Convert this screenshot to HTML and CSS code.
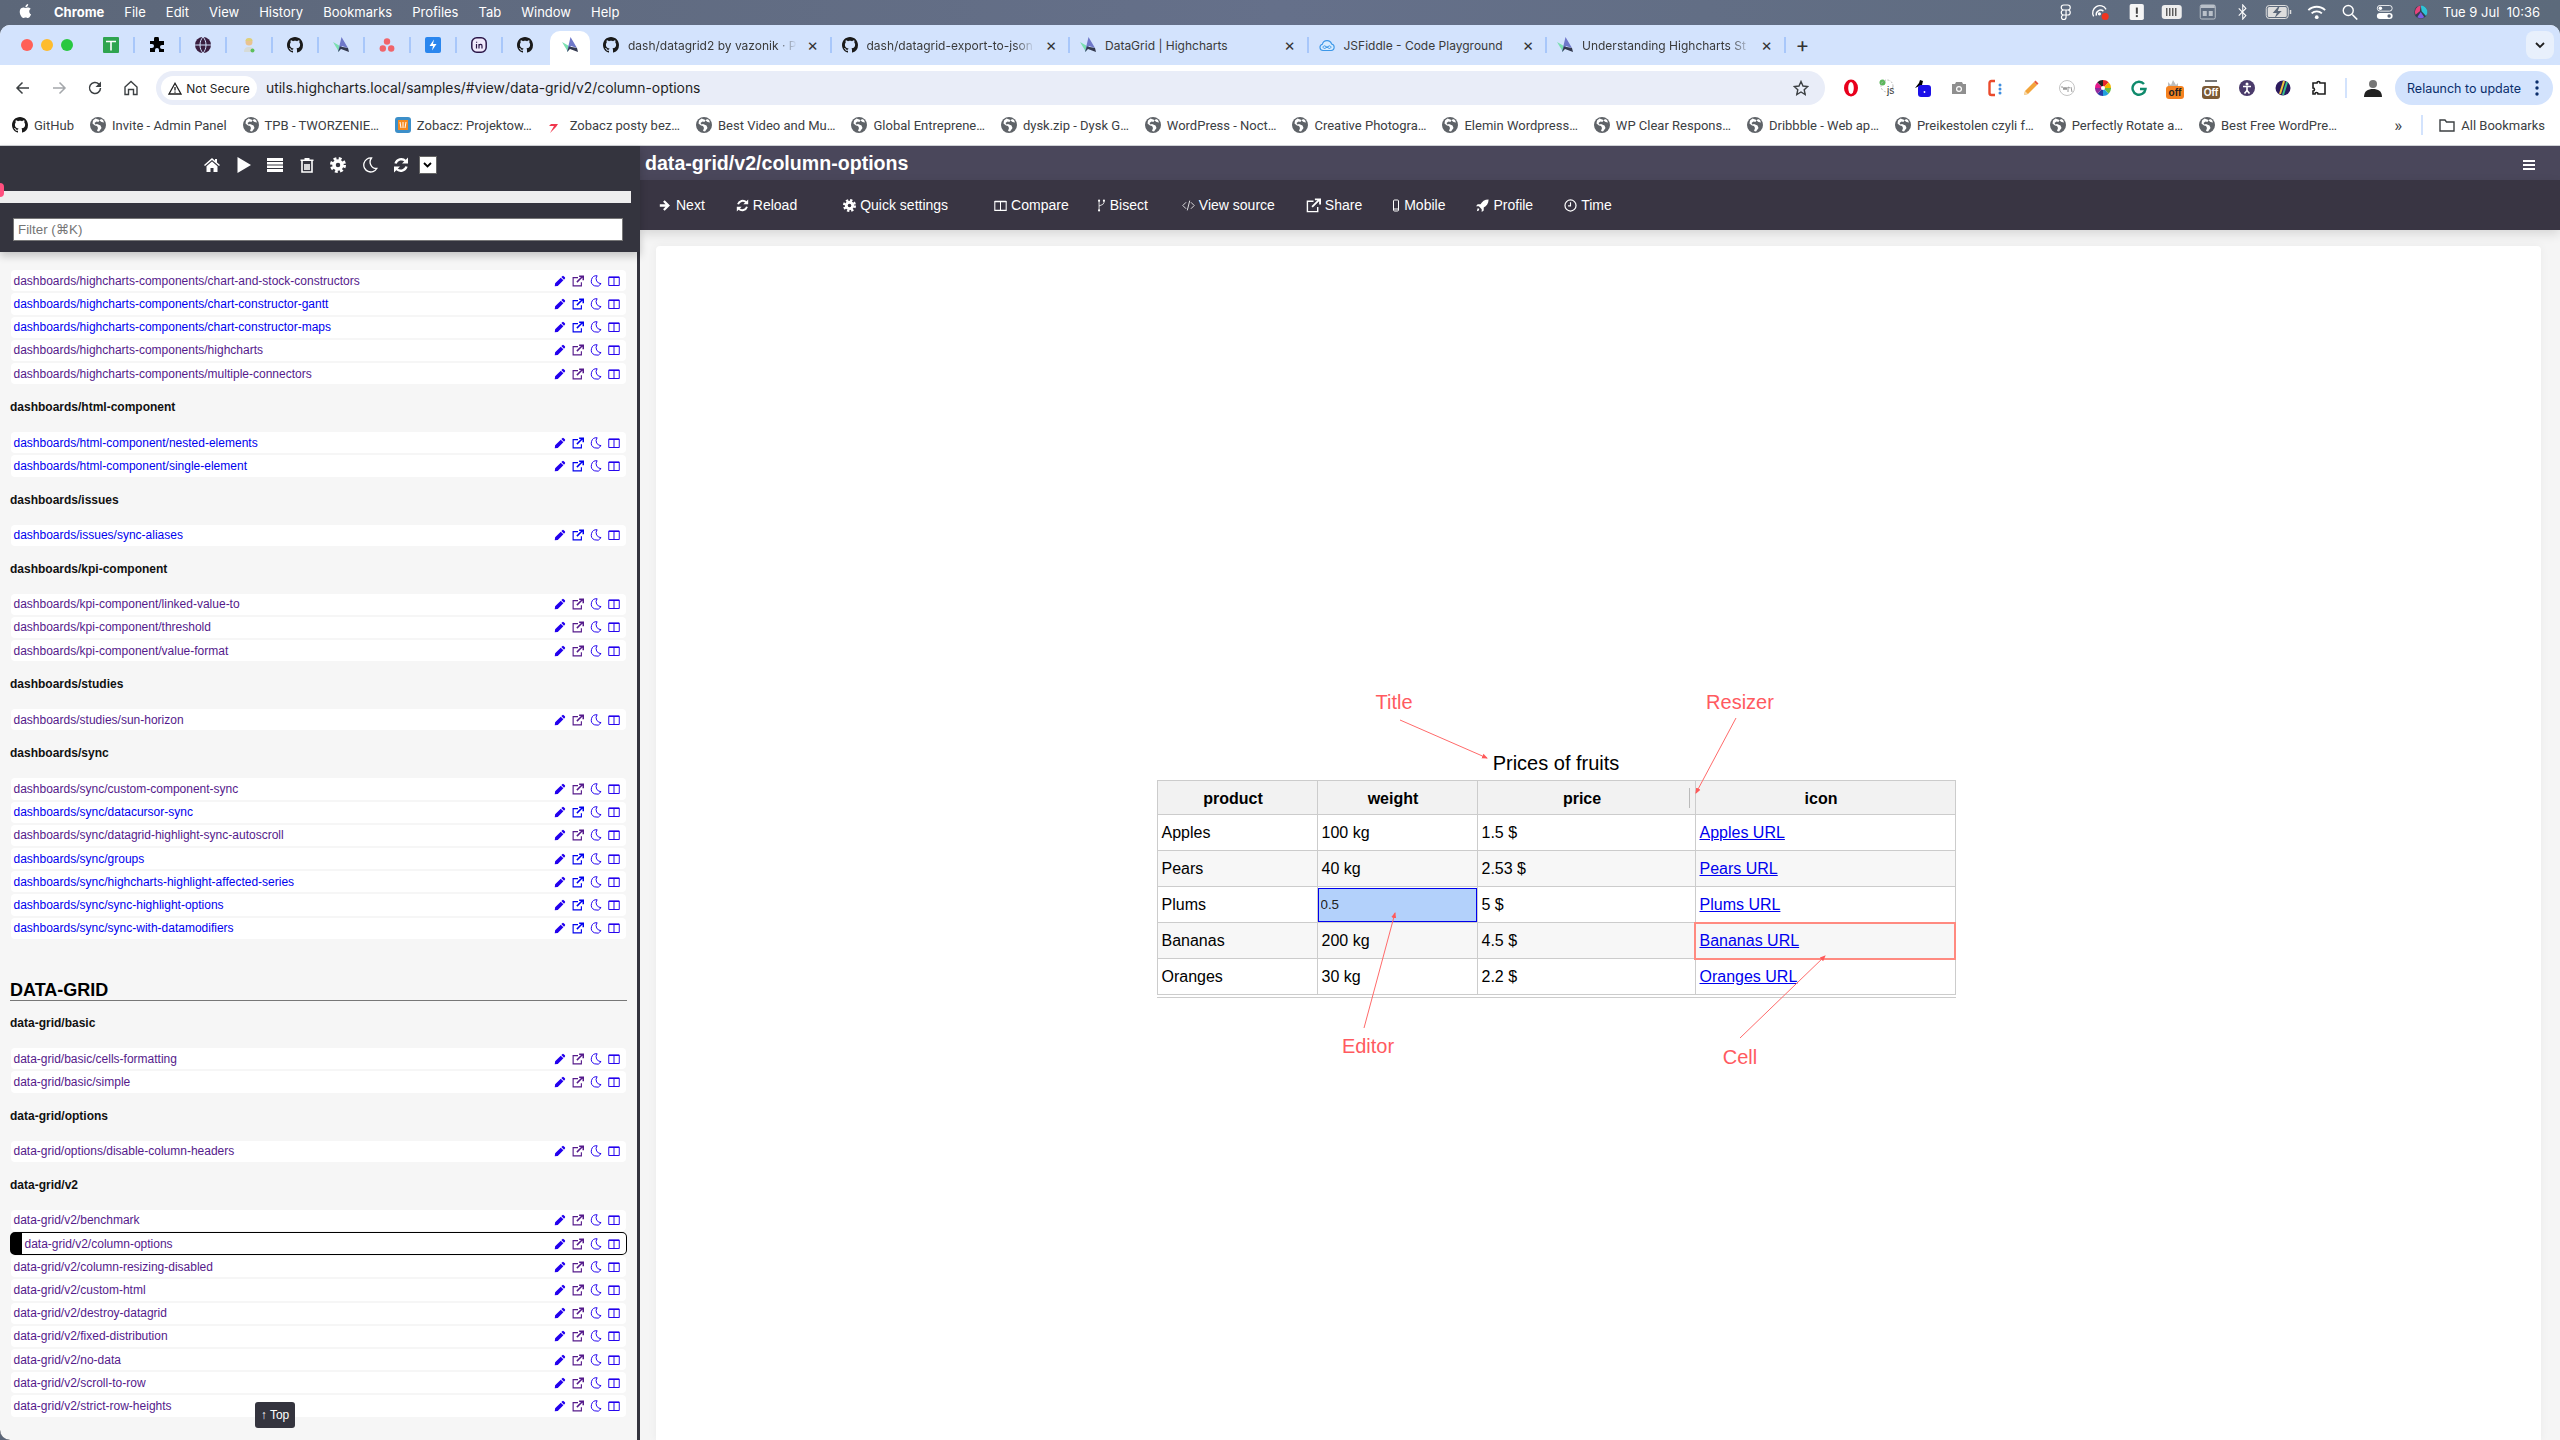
FILE: index.html
```html
<!DOCTYPE html>
<html lang="en">
<head>
<meta charset="utf-8">
<title>data-grid/v2/column-options</title>
<link rel="stylesheet" href="styles.css">
</head>
<body>
<svg class="defs" xmlns="http://www.w3.org/2000/svg">
  <symbol id="gh" viewBox="0 0 16 16"><path fill="currentColor" d="M8 0C3.58 0 0 3.58 0 8c0 3.54 2.29 6.53 5.47 7.59.4.07.55-.17.55-.38 0-.19-.01-.82-.01-1.49-2.01.37-2.53-.49-2.69-.94-.09-.23-.48-.94-.82-1.13-.28-.15-.68-.52-.01-.53.63-.01 1.08.58 1.23.82.72 1.21 1.87.87 2.33.66.07-.52.28-.87.51-1.07-1.78-.2-3.64-.89-3.64-3.95 0-.87.31-1.59.82-2.15-.08-.2-.36-1.02.08-2.12 0 0 .67-.21 2.2.82.64-.18 1.32-.27 2-.27.68 0 1.36.09 2 .27 1.53-1.04 2.2-.82 2.2-.82.44 1.1.16 1.92.08 2.12.51.56.82 1.27.82 2.15 0 3.07-1.87 3.75-3.65 3.95.29.25.54.73.54 1.48 0 1.07-.01 1.93-.01 2.2 0 .21.15.46.55.38A8.013 8.013 0 0016 8c0-4.42-3.58-8-8-8z"/></symbol>
  <symbol id="hc" viewBox="0 0 16 16"><path fill="#7be0b0" d="M0 5l6 10 1-6z"/><path fill="#6f78c9" d="M8.500 0L5 15l4-6 6 2z"/><path fill="#33394f" d="M7 9.500l8 1.500 1 4-8-3-3 3z"/></symbol>
  <symbol id="globe" viewBox="0 0 16 16"><circle cx="8" cy="8" r="8" fill="#5f6368"/><path fill="#fff" d="M5.500 1.500L3 3.500l-.5 3 2.500 2 2 .5 1 2-1 3 2 .5 2.500-3.500-1-2.500-3.500-1.500-1.500.5-1-1.500 2-1.500 2 .5 1-2zM11 2l-1.500 1.500 2 1.500 2.500.5-1-2.500z"/></symbol>
  <symbol id="pencil" viewBox="0 0 16 16"><path d="M11 1.500a1.500 1.500 0 0 1 2 0l1.500 1.500a1.500 1.500 0 0 1 0 2l-1.200 1.200-3.500-3.500zM9 3.500L12.500 7 5 14.500 1 15l.5-4z"/></symbol>
  <symbol id="ext" viewBox="0 0 16 16"><path fill="none" stroke="currentColor" stroke-width="1.500" d="M12.500 9.500v5h-11v-11h6.500"/><path fill="none" stroke="currentColor" stroke-width="2" d="M6.500 9.500L14 2M9.500 1.500h5.500V7"/></symbol>
  <symbol id="moon" viewBox="0 0 16 16"><path fill="none" stroke="currentColor" stroke-width="1.300" d="M9.500 1A7 7 0 1 0 14.800 11.500 6.500 6.500 0 0 1 9.500 1z"/></symbol>
  <symbol id="cols" viewBox="0 0 16 16"><path fill="none" stroke="currentColor" stroke-width="1.300" d="M1 3h14v11H1zM8 3v11"/><path fill="currentColor" d="M1 2h14v2H1z"/></symbol>
  <symbol id="ri" viewBox="0 0 66 12">
    <use href="#pencil" width="12" height="12" x="0" fill="#2200ee"/>
    <use href="#ext" width="12" height="12" x="18"/>
    <use href="#moon" width="12" height="12" x="36" color="#2200ee"/>
    <use href="#cols" width="12" height="12" x="54" color="#2200ee"/>
  </symbol>
  <symbol id="gear" viewBox="0 0 16 16"><circle cx="8" cy="8" r="4" fill="none" stroke="currentColor" stroke-width="3.500"/><circle cx="8" cy="8" r="6.500" fill="none" stroke="currentColor" stroke-width="3" stroke-dasharray="2.800 2.300"/></symbol>
  <symbol id="sync" viewBox="0 0 16 16"><path fill="none" stroke="currentColor" stroke-width="2.400" d="M2.500 6.500A6 6 0 0 1 12.500 4M13.500 9.500A6 6 0 0 1 3.500 12"/><path fill="currentColor" d="M15 .5v6H9zM1 15.500v-6h6z"/></symbol>
</svg>

<header class="menubar">
  <svg class="apple" viewBox="0 0 16 18"><path fill="#fff" d="M11.700 9.500c0-2 1.600-2.900 1.700-3-1-1.300-2.400-1.500-2.900-1.500-1.200-.1-2.400.7-3 .7s-1.600-.7-2.600-.7C3.500 5 2.200 5.800 1.500 7c-1.400 2.400-.4 6 1 8 .7 1 1.500 2 2.500 2s1.400-.6 2.600-.6 1.500.6 2.600.6 1.800-1 2.500-2c.8-1.100 1.100-2.200 1.100-2.300-.1 0-2.100-.8-2.100-3.200zM9.700 3.500c.5-.7.900-1.600.8-2.500-.8 0-1.700.5-2.300 1.200-.5.600-1 1.500-.8 2.400.9 0 1.800-.5 2.300-1.100z"/></svg>
  <span class="menu-strong">Chrome</span>
  <span>File</span><span>Edit</span><span>View</span><span>History</span><span>Bookmarks</span><span>Profiles</span><span>Tab</span><span>Window</span><span>Help</span>
  <div class="status">
    <svg class="si" viewBox="0 0 16 16"><path fill="none" stroke="#fff" stroke-width="1.200" d="M6 1h4a2.500 2.500 0 0 1 0 5H6a2.500 2.500 0 0 1 0-5zM6 6h4a2.500 2.500 0 0 1 0 5H6a2.500 2.500 0 0 1 0-5zM6 11a2.300 2.300 0 1 0 2.300 2.300V6"/></svg>
    <svg class="si" viewBox="0 0 20 18"><path fill="none" stroke="#fff" stroke-width="1.500" d="M2 14A8 8 0 0 1 16 6M5 13a5 5 0 0 1 8-5"/><circle cx="8.500" cy="11" r="1.800" fill="#fff"/><circle cx="15" cy="14" r="4" fill="#f0341f"/></svg>
    <svg class="si" viewBox="0 0 16 18"><rect width="16" height="18" rx="2" fill="#f5f5f5"/><rect x="7" y="4" width="2.200" height="7" fill="#444"/><rect x="7" y="12.500" width="2.200" height="2.200" fill="#444"/></svg>
    <svg class="si wide" viewBox="0 0 20 14"><rect width="20" height="14" rx="3" fill="#eee"/><path stroke="#555" stroke-width="1.400" d="M5 3v8M8 3v8M11 3v8M14 3v8"/></svg>
    <svg class="si" viewBox="0 0 16 16"><rect x=".5" y="1" width="15" height="14" rx="1.500" fill="none" stroke="#b9c0c9"/><path fill="#b9c0c9" d="M1 1h14v3H1zM3 7h4v5H3zM9 7h4v5H9z"/></svg>
    <svg class="si" viewBox="0 0 12 18"><path fill="none" stroke="#fff" stroke-width="1.200" d="M1.500 5l8 8-3.500 4V1l3.500 4-8 8"/></svg>
    <svg class="si wide" viewBox="0 0 26 14"><rect x=".5" y=".5" width="22" height="13" rx="3" fill="none" stroke="#ddd"/><rect x="2" y="2" width="19" height="10" rx="1.500" fill="#ddd"/><path fill="#5b6779" d="M13 1L7 8h4l-2 5 7-7h-4l2-5z"/><rect x="24" y="5" width="1.500" height="4" fill="#ddd"/></svg>
    <svg class="si wide wifi" viewBox="0 0 20 15"><path fill="none" stroke="#fff" stroke-width="2" d="M1 5.500a13 13 0 0 1 18 0M4.500 9a8 8 0 0 1 11 0"/><circle cx="10" cy="13" r="2" fill="#fff"/></svg>
    <svg class="si" viewBox="0 0 16 16"><circle cx="6.500" cy="6.500" r="5" fill="none" stroke="#fff" stroke-width="1.400"/><path stroke="#fff" stroke-width="1.600" d="M10.500 10.500l5 5"/></svg>
    <svg class="si wide" viewBox="0 0 18 16"><rect x=".5" y=".5" width="17" height="6.500" rx="3.200" fill="none" stroke="#fff"/><circle cx="4" cy="3.700" r="2" fill="#fff"/><rect y="9" width="18" height="7" rx="3.500" fill="#fff"/><circle cx="14" cy="12.500" r="2" fill="#5b6779"/></svg>
    <svg class="si wide" viewBox="0 0 16 16"><circle cx="8" cy="8" r="7.500" fill="#33404f"/><path fill="#e6447c" d="M8 .5A7.500 7.500 0 0 0 2 11l5-4z"/><path fill="#2fc3d6" d="M8 .5a7.500 7.500 0 0 1 6 12L9 7z"/><path fill="#7c5ce0" d="M4 14a7.500 7.500 0 0 0 8 0L8 8z"/></svg>
    <span class="clock">Tue 9 Jul&nbsp;&nbsp;10:36</span>
  </div>
</header>

<div class="window">
  <div class="tabstrip">
    <div class="lights"><i class="light red"></i><i class="light amber"></i><i class="light green"></i></div>
    <div class="pin"><svg class="fav" viewBox="0 0 16 16"><rect width="16" height="16" rx="1" fill="#2fa44f"/><path stroke="#fff" stroke-width="1.600" d="M3 4.500h10M8 4.500v9"/></svg></div><i class="tsep"></i>
    <div class="pin"><svg class="fav" viewBox="0 0 16 16"><path d="M1 4h4V2a2 2 0 0 1 5 0v2h5v4h-2a2 2 0 0 0 0 4h2v3H10v-2a2 2 0 0 0-4 0v2H1v-4h2a2 2 0 0 0 0-4H1z"/></svg></div><i class="tsep"></i>
    <div class="pin"><svg class="fav" viewBox="0 0 16 16"><circle cx="8" cy="8" r="8" fill="#3a1e3f"/><path fill="none" stroke="#d3e3fd" d="M0 8h16M8 0c-4 4-4 12 0 16M8 0c4 4 4 12 0 16"/></svg></div><i class="tsep"></i>
    <div class="pin"><svg class="fav" viewBox="0 0 16 16"><circle cx="8" cy="5" r="3.500" fill="#e9c28f"/><path fill="#dfcf7a" d="M4.500 4a3.500 3 0 0 1 7 0z"/><path fill="#d6dbd7" d="M3 15c0-4 2-5 5-5s5 1 5 5z"/><circle cx="11.500" cy="13.500" r="2" fill="#5cc05c"/></svg></div><i class="tsep"></i>
    <div class="pin"><svg class="fav dark"><use href="#gh"/></svg></div><i class="tsep"></i>
    <div class="pin"><svg class="fav"><use href="#hc"/></svg></div><i class="tsep"></i>
    <div class="pin"><svg class="fav" viewBox="0 0 16 16"><circle cx="8" cy="4.500" r="3.200" fill="#f0646a"/><circle cx="3.800" cy="11.500" r="3.200" fill="#f0646a"/><circle cx="12.200" cy="11.500" r="3.200" fill="#f0646a"/></svg></div><i class="tsep"></i>
    <div class="pin"><svg class="fav" viewBox="0 0 16 16"><rect width="16" height="16" rx="2" fill="#2a86ee"/><path fill="#fff" d="M9 2.500L4.500 9H8l-1 4.500L11.500 7H8z"/></svg></div><i class="tsep"></i>
    <div class="pin"><svg class="fav" viewBox="0 0 16 16"><rect x=".8" y=".8" width="14.400" height="14.400" rx="5" fill="#efe8fb" stroke="#2b1648" stroke-width="1.500"/><path stroke="#2b1648" stroke-width="1.200" fill="none" d="M5.500 7v4.500M5.600 4.800v1M8 11.500V7M8 8.500c1-1.500 3-1.500 3 .5v2.500"/></svg></div><i class="tsep"></i>
    <div class="pin"><svg class="fav dark"><use href="#gh"/></svg></div>
    <div class="tab-active"><svg class="fav"><use href="#hc"/></svg></div>
    <div class="tab"><svg class="fav dark"><use href="#gh"/></svg><span class="tab-title fade">dash/datagrid2 by vazonik · P</span><span class="tab-x">×</span></div>
    <div class="tab"><svg class="fav dark"><use href="#gh"/></svg><span class="tab-title fade">dash/datagrid-export-to-json</span><span class="tab-x">×</span></div>
    <div class="tab"><svg class="fav"><use href="#hc"/></svg><span class="tab-title">DataGrid | Highcharts</span><span class="tab-x">×</span></div>
    <div class="tab"><svg class="fav" viewBox="0 0 16 16"><path fill="#d7ecff" stroke="#3c97e8" stroke-width="1.100" d="M4 13.500a3.200 3.200 0 0 1-.6-6.300A4.800 4.800 0 0 1 12.600 7a3.300 3.300 0 0 1-.4 6.500z"/><path fill="none" stroke="#3c97e8" d="M6 9a1.300 1.300 0 1 0 0 2.300l4-2.300a1.300 1.300 0 1 1 0 2.300z"/></svg><span class="tab-title">JSFiddle - Code Playground</span><span class="tab-x">×</span></div>
    <div class="tab"><svg class="fav"><use href="#hc"/></svg><span class="tab-title fade">Understanding Highcharts St</span><span class="tab-x">×</span></div>
    <span class="tab-plus">+</span>
    <div class="tab-more"><svg width="10" height="7" viewBox="0 0 10 7"><path fill="none" stroke="#1f1f1f" stroke-width="1.800" d="M1 1l4 4 4-4"/></svg></div>
  </div>

  <div class="toolbar">
    <svg class="nav" viewBox="0 0 16 16"><path fill="none" stroke="#3c4043" stroke-width="1.500" d="M14 8H2M7.500 2.500L2 8l5.500 5.500"/></svg>
    <svg class="nav" viewBox="0 0 16 16"><path fill="none" stroke="#a4a7ab" stroke-width="1.500" d="M2 8h12M8.500 2.500L14 8l-5.500 5.500"/></svg>
    <svg class="nav" viewBox="0 0 16 16"><path fill="none" stroke="#3c4043" stroke-width="1.500" d="M13.500 8a5.500 5.500 0 1 1-1.600-3.900L13.500 6"/><path fill="#3c4043" d="M14 1.500V7H8.500z"/></svg>
    <svg class="nav" viewBox="0 0 16 16"><path fill="none" stroke="#3c4043" stroke-width="1.400" d="M2 7l6-5.500L14 7v7.500h-3.500V9.500h-5v5H2z"/></svg>
    <div class="omnibox">
      <span class="secure"><svg width="14" height="13" viewBox="0 0 14 13"><path fill="none" stroke="#1f1f1f" stroke-width="1.300" d="M7 1.300L1 12h12z"/><path stroke="#1f1f1f" stroke-width="1.300" d="M7 5v3.500M7 9.500v1.300"/></svg>Not Secure</span>
      <span class="url">utils.highcharts.local/samples/#view/data-grid/v2/column-options</span>
      <svg class="star" viewBox="0 0 16 16"><path fill="none" stroke="#3c4043" stroke-width="1.400" d="M8 1.500l2 4.500 4.800.5-3.600 3.200 1 4.800L8 12l-4.200 2.500 1-4.800L1.200 6.500 6 6z"/></svg>
    </div>
    <div class="exts">
      <span class="ext"><svg viewBox="0 0 16 18"><ellipse cx="8" cy="9" rx="7" ry="8.500" fill="#e8001c"/><ellipse cx="8" cy="9" rx="2.800" ry="6" fill="#fff"/></svg></span>
      <span class="ext"><svg viewBox="0 0 16 18"><circle cx="3.500" cy="3.500" r="3" fill="#5cb85c"/><circle cx="8" cy="7" r="6" fill="none" stroke="#bbb" stroke-dasharray="2 1.500"/></svg><b class="js">js</b></span>
      <span class="ext"><svg viewBox="0 0 16 18"><path fill="#000" d="M0 9l4-5 1-3 3 1-1 4z"/><rect x="3" y="6" width="13" height="12" rx="3" fill="#1c10e8"/><circle cx="9.500" cy="13" r=".9" fill="#fff"/></svg></span>
      <span class="ext"><svg viewBox="0 0 16 16"><path fill="#8f8f8f" d="M1 4h3l1-2h6l1 2h3v10H1z"/><circle cx="8" cy="9" r="3" fill="#fff"/><circle cx="8" cy="9" r="1.800" fill="#8f8f8f"/></svg></span>
      <span class="ext"><svg viewBox="0 0 16 18"><path fill="none" stroke="#ea4a2c" stroke-width="2.400" d="M8 2H4.500Q2.500 2 2.500 4v10q0 2 2 2H8"/><circle cx="13" cy="6" r="1.500" fill="#3e8ee0"/><circle cx="13" cy="10" r="1.500" fill="#3e8ee0"/><circle cx="13" cy="14" r="1.500" fill="#3e8ee0"/></svg></span>
      <span class="ext"><svg viewBox="0 0 16 16"><path fill="#f3a43a" d="M1 15l1-4 9-9 3 3-9 9z"/><path fill="#e85b3b" d="M11 2l1.500-1.500 3 3L14 5z"/><path fill="#f6d9a9" d="M1 15l1-4 3 3z"/></svg></span>
      <span class="ext"><svg viewBox="0 0 16 16"><circle cx="8" cy="8" r="7.500" fill="none" stroke="#c4c4c4"/><path fill="none" stroke="#9a9a9a" d="M2 7l2 0 1 3 1-3 1 3 1-3M9 12V7l2 1M12 7l1 5"/></svg></span>
      <span class="ext"><svg viewBox="0 0 16 16"><path fill="#e8262a" d="M8 8V0a8 8 0 0 1 5.700 2.300z"/><path fill="#f4b400" d="M8 8l5.700-5.700A8 8 0 0 1 16 8z"/><path fill="#67bd45" d="M8 8h8a8 8 0 0 1-2.300 5.700z"/><path fill="#21a2dd" d="M8 8l5.700 5.700A8 8 0 0 1 8 16z"/><path fill="#2a3ba8" d="M8 8v8a8 8 0 0 1-5.700-2.300z"/><path fill="#8f2a9e" d="M8 8l-5.700 5.700A8 8 0 0 1 0 8z"/><path fill="#e61a8d" d="M8 8H0a8 8 0 0 1 2.300-5.700z"/><path fill="#222" d="M8 8L2.300 2.300A8 8 0 0 1 8 0z"/><circle cx="8" cy="8" r="2" fill="#fff"/></svg></span>
      <span class="ext"><svg viewBox="0 0 16 16"><path fill="none" stroke="#0f8a6c" stroke-width="2.400" d="M13 4A6.500 6.500 0 1 0 14.500 9H9"/></svg></span>
      <span class="ext"><svg viewBox="0 0 16 18"><path fill="#bdbdbd" d="M1 12V3l3 3 2-5 3 5 2-2v8z"/></svg><b class="badge orange">off</b></span>
      <span class="ext"><svg viewBox="0 0 16 18"><rect x="2" y="1" width="12" height="2" fill="#777"/></svg><b class="badge brown">Off</b></span>
      <span class="ext"><svg viewBox="0 0 16 16"><circle cx="8" cy="8" r="8" fill="#4a3b6b"/><circle cx="8" cy="4" r="1.500" fill="#fff"/><path stroke="#fff" stroke-width="1.600" d="M4 6.500h8M8 6.500v4M8 10.500l-2.500 3M8 10.500l2.500 3"/></svg></span>
      <span class="ext"><svg viewBox="0 0 16 16"><circle cx="8" cy="8" r="7.500" fill="#2c1a5e"/><path stroke="#f0c33c" stroke-width="2" d="M5 14L9 1"/><path stroke="#35c08f" stroke-width="2" d="M8 15L12 2"/></svg></span>
      <span class="ext"><svg viewBox="0 0 16 16"><path fill="none" stroke="#1f1f1f" stroke-width="1.600" d="M2 3h4a1.500 1.500 0 0 1 3 0h5v4h0v7H7a1.500 1.500 0 0 0-3 0H2v-3a1.500 1.500 0 0 0 0-3V3z"/></svg></span>
    </div>
    <i class="vsep"></i>
    <svg class="avatar" viewBox="0 0 18 18"><circle cx="9" cy="5" r="4" fill="#777"/><path fill="#222" d="M0 18c0-6 4-8 9-8s9 2 9 8z"/></svg>
    <div class="relaunch"><span>Relaunch to update</span><svg width="4" height="16" viewBox="0 0 4 16"><circle cx="2" cy="2" r="1.700" fill="#0b2e6b"/><circle cx="2" cy="8" r="1.700" fill="#0b2e6b"/><circle cx="2" cy="14" r="1.700" fill="#0b2e6b"/></svg></div>
  </div>

  <nav class="bookmarks">
    <a class="bm"><svg class="bi dark"><use href="#gh"/></svg>GitHub</a>
    <a class="bm"><svg class="bi"><use href="#globe"/></svg>Invite - Admin Panel</a>
    <a class="bm"><svg class="bi"><use href="#globe"/></svg>TPB - TWORZENIE…</a>
    <a class="bm"><svg class="bi" viewBox="0 0 16 16"><rect width="16" height="16" rx="3" fill="#3c8fc9"/><rect x="3" y="3" width="10" height="10" fill="#f58a1f"/><path stroke="#fff" d="M5 5l1 6M8 5l0 6M11 5l-1 6"/></svg>Zobacz: Projektow…</a>
    <a class="bm"><svg class="bi" viewBox="0 0 16 16"><path fill="#f0384e" d="M14 0L7 7H3L1 9h5l-4 7 6-6 2-3H7z"/></svg>Zobacz posty bez…</a>
    <a class="bm"><svg class="bi"><use href="#globe"/></svg>Best Video and Mu…</a>
    <a class="bm"><svg class="bi"><use href="#globe"/></svg>Global Entreprene…</a>
    <a class="bm"><svg class="bi"><use href="#globe"/></svg>dysk.zip - Dysk G…</a>
    <a class="bm"><svg class="bi"><use href="#globe"/></svg>WordPress - Noct…</a>
    <a class="bm"><svg class="bi"><use href="#globe"/></svg>Creative Photogra…</a>
    <a class="bm"><svg class="bi"><use href="#globe"/></svg>Elemin Wordpress…</a>
    <a class="bm"><svg class="bi"><use href="#globe"/></svg>WP Clear Respons…</a>
    <a class="bm"><svg class="bi"><use href="#globe"/></svg>Dribbble - Web ap…</a>
    <a class="bm"><svg class="bi"><use href="#globe"/></svg>Preikestolen czyli f…</a>
    <a class="bm"><svg class="bi"><use href="#globe"/></svg>Perfectly Rotate a…</a>
    <a class="bm"><svg class="bi"><use href="#globe"/></svg>Best Free WordPre…</a>
    <span class="bm-more">»</span>
    <i class="bsep"></i>
    <a class="bm"><svg class="bi" viewBox="0 0 16 16"><path fill="none" stroke="#3c4043" stroke-width="1.400" d="M1 3h5l1.500 2H15v9H1z"/></svg>All Bookmarks</a>
  </nav>

  <div class="page">
    <aside class="sidebar">
      <div class="side-head">
        <div class="side-tools">
          <svg class="st" viewBox="0 0 16 16"><path fill="#fff" d="M8 1l3 2.700V2h2v3.500L16 8l-1 1-7-6-7 6-1-1zM8 4.500l5.500 4.700V15H9.500v-4h-3v4H2.500V9.200z"/></svg>
          <svg class="st" viewBox="0 0 16 16"><path fill="#fff" d="M1.500 0L15 8 1.500 16z"/></svg>
          <svg class="st" viewBox="0 0 16 16"><path fill="#fff" d="M0 1h16v3H0zM0 5h16v2.500H0zM0 8.500h16V11H0zM0 12h16v3H0z"/></svg>
          <svg class="st" viewBox="0 0 16 16"><path fill="none" stroke="#fff" stroke-width="1.600" d="M3 4v11h10V4M6 7v6M8 7v6M10 7v6"/><path fill="#fff" d="M1.500 2.500h13V4h-13zM5.500 1h5v2h-5z"/></svg>
          <svg class="st"><use href="#gear"/></svg>
          <svg class="st"><use href="#moon"/></svg>
          <svg class="st"><use href="#sync"/></svg>
          <span class="side-check"><svg width="9" height="6" viewBox="0 0 9 6"><path fill="none" stroke="#000" stroke-width="1.800" d="M1 1l3.500 3.500L8 1"/></svg></span>
        </div>
        <div class="side-bar"></div>
        <input class="filter" type="text" placeholder="Filter (⌘K)">
      </div>
      <div class="pink-tag"></div>
      <div class="side-list">
        <a class="row v"><span>dashboards/highcharts-components/chart-and-stock-constructors</span><svg class="ri"><use href="#ri"/></svg></a>
        <a class="row"><span>dashboards/highcharts-components/chart-constructor-gantt</span><svg class="ri"><use href="#ri"/></svg></a>
        <a class="row"><span>dashboards/highcharts-components/chart-constructor-maps</span><svg class="ri"><use href="#ri"/></svg></a>
        <a class="row v"><span>dashboards/highcharts-components/highcharts</span><svg class="ri"><use href="#ri"/></svg></a>
        <a class="row v"><span>dashboards/highcharts-components/multiple-connectors</span><svg class="ri"><use href="#ri"/></svg></a>
        <h4 class="group">dashboards/html-component</h4>
        <a class="row"><span>dashboards/html-component/nested-elements</span><svg class="ri"><use href="#ri"/></svg></a>
        <a class="row"><span>dashboards/html-component/single-element</span><svg class="ri"><use href="#ri"/></svg></a>
        <h4 class="group">dashboards/issues</h4>
        <a class="row"><span>dashboards/issues/sync-aliases</span><svg class="ri"><use href="#ri"/></svg></a>
        <h4 class="group">dashboards/kpi-component</h4>
        <a class="row v"><span>dashboards/kpi-component/linked-value-to</span><svg class="ri"><use href="#ri"/></svg></a>
        <a class="row v"><span>dashboards/kpi-component/threshold</span><svg class="ri"><use href="#ri"/></svg></a>
        <a class="row v"><span>dashboards/kpi-component/value-format</span><svg class="ri"><use href="#ri"/></svg></a>
        <h4 class="group">dashboards/studies</h4>
        <a class="row v"><span>dashboards/studies/sun-horizon</span><svg class="ri"><use href="#ri"/></svg></a>
        <h4 class="group">dashboards/sync</h4>
        <a class="row v"><span>dashboards/sync/custom-component-sync</span><svg class="ri"><use href="#ri"/></svg></a>
        <a class="row"><span>dashboards/sync/datacursor-sync</span><svg class="ri"><use href="#ri"/></svg></a>
        <a class="row v"><span>dashboards/sync/datagrid-highlight-sync-autoscroll</span><svg class="ri"><use href="#ri"/></svg></a>
        <a class="row"><span>dashboards/sync/groups</span><svg class="ri"><use href="#ri"/></svg></a>
        <a class="row"><span>dashboards/sync/highcharts-highlight-affected-series</span><svg class="ri"><use href="#ri"/></svg></a>
        <a class="row"><span>dashboards/sync/sync-highlight-options</span><svg class="ri"><use href="#ri"/></svg></a>
        <a class="row"><span>dashboards/sync/sync-with-datamodifiers</span><svg class="ri"><use href="#ri"/></svg></a>
        <h3 class="section">DATA-GRID</h3>
        <h4 class="group">data-grid/basic</h4>
        <a class="row v"><span>data-grid/basic/cells-formatting</span><svg class="ri"><use href="#ri"/></svg></a>
        <a class="row v"><span>data-grid/basic/simple</span><svg class="ri"><use href="#ri"/></svg></a>
        <h4 class="group">data-grid/options</h4>
        <a class="row v"><span>data-grid/options/disable-column-headers</span><svg class="ri"><use href="#ri"/></svg></a>
        <h4 class="group">data-grid/v2</h4>
        <a class="row v"><span>data-grid/v2/benchmark</span><svg class="ri"><use href="#ri"/></svg></a>
        <a class="row v selected"><span>data-grid/v2/column-options</span><svg class="ri"><use href="#ri"/></svg></a>
        <a class="row v"><span>data-grid/v2/column-resizing-disabled</span><svg class="ri"><use href="#ri"/></svg></a>
        <a class="row v"><span>data-grid/v2/custom-html</span><svg class="ri"><use href="#ri"/></svg></a>
        <a class="row v"><span>data-grid/v2/destroy-datagrid</span><svg class="ri"><use href="#ri"/></svg></a>
        <a class="row v"><span>data-grid/v2/fixed-distribution</span><svg class="ri"><use href="#ri"/></svg></a>
        <a class="row v"><span>data-grid/v2/no-data</span><svg class="ri"><use href="#ri"/></svg></a>
        <a class="row v"><span>data-grid/v2/scroll-to-row</span><svg class="ri"><use href="#ri"/></svg></a>
        <a class="row v"><span>data-grid/v2/strict-row-heights</span><svg class="ri"><use href="#ri"/></svg></a>
      </div>
      <a class="to-top">↑ Top</a>
    </aside>

    <main class="main">
      <div class="title-bar">
        <h1>data-grid/v2/column-options</h1>
        <svg class="burger" viewBox="0 0 12 10"><path fill="#fff" d="M0 0h12v2H0zM0 4h12v2H0zM0 8h12v2H0z"/></svg>
      </div>
      <div class="actions">
        <a class="act"><svg viewBox="0 0 16 16"><path fill="#fff" d="M1 6.500h7L5 3.500 7 1.500 13.500 8 7 14.500l-2-2 3-3H1z"/></svg>Next</a>
        <a class="act"><svg><use href="#sync"/></svg>Reload</a>
        <a class="act wide"><svg><use href="#gear"/></svg>Quick settings</a>
        <a class="act wide"><svg><use href="#cols"/></svg>Compare</a>
        <a class="act tight"><svg viewBox="0 0 10 16" class="thin"><path fill="none" stroke="#fff" d="M2 2v12M8 2v2.500Q8 7 2 8.500"/><circle cx="2" cy="2" r="1.300" fill="#fff"/><circle cx="8" cy="2" r="1.300" fill="#fff"/><circle cx="2" cy="14" r="1.300" fill="#fff"/></svg>Bisect</a>
        <a class="act nudge"><svg viewBox="0 0 16 16"><path fill="none" stroke="#fff" d="M5 4L1 8l4 4M11 4l4 4-4 4M9.500 2l-3 12"/></svg>View source</a>
        <a class="act"><svg class="broad"><use href="#ext"/></svg>Share</a>
        <a class="act"><svg viewBox="0 0 6 12" class="slim"><rect x=".5" y=".5" width="5" height="11" rx="1" fill="none" stroke="#fff"/><path stroke="#fff" d="M1 9.500h4"/></svg>Mobile</a>
        <a class="act"><svg viewBox="0 0 16 16"><path fill="#fff" d="M15.500.500c-5 0-8 2.500-10 6H2L0 9h3.500L7 12.500V16l2.500-2v-3.500c3.500-2 6-5 6-10zM1 15l2.500-1 .5-2-2-.5z"/></svg>Profile</a>
        <a class="act"><svg viewBox="0 0 16 16"><circle cx="8" cy="8" r="6.800" fill="none" stroke="#fff" stroke-width="1.500"/><path fill="none" stroke="#fff" stroke-width="1.400" d="M8 4v4.500H5"/></svg>Time</a>
      </div>
      <div class="content">
        <section class="card">
          <div class="grid-wrap">
            <div class="grid-title">Prices of fruits</div>
            <table class="grid">
              <thead><tr><th class="c1">product</th><th class="c2">weight</th><th class="c3">price<i class="resizer"></i></th><th class="c4">icon</th></tr></thead>
              <tbody>
                <tr><td>Apples</td><td>100 kg</td><td>1.5 $</td><td><a href="#">Apples URL</a></td></tr>
                <tr><td>Pears</td><td>40 kg</td><td>2.53 $</td><td><a href="#">Pears URL</a></td></tr>
                <tr><td>Plums</td><td class="editing"><input class="editor" type="text" value="0.5"></td><td>5 $</td><td><a href="#">Plums URL</a></td></tr>
                <tr><td>Bananas</td><td>200 kg</td><td>4.5 $</td><td class="marked"><a href="#">Bananas URL</a></td></tr>
                <tr><td>Oranges</td><td>30 kg</td><td>2.2 $</td><td><a href="#">Oranges URL</a></td></tr>
              </tbody>
            </table>
          </div>
          <svg class="notes" viewBox="656 246 1885 1194" xmlns="http://www.w3.org/2000/svg">
            <defs><marker id="tip" markerWidth="6" markerHeight="6" refX="5" refY="3" orient="auto"><path d="M0 0.500L6 3 0 5.500z" fill="#ff5a5a"/></marker></defs>
            <text x="1394" y="709" text-anchor="middle">Title</text>
            <text x="1740" y="709" text-anchor="middle">Resizer</text>
            <text x="1368" y="1053" text-anchor="middle">Editor</text>
            <text x="1740" y="1064" text-anchor="middle">Cell</text>
            <path d="M1400 720L1487 758" marker-end="url(#tip)"/>
            <path d="M1736 718L1696 793" marker-end="url(#tip)"/>
            <path d="M1364 1028L1395 913" marker-end="url(#tip)"/>
            <path d="M1740 1038L1825 956" marker-end="url(#tip)"/>
          </svg>
        </section>
      </div>
    </main>
  </div>
</div>
</body>
</html>
```
FILE: styles.css
```css
* { box-sizing: border-box; }
html, body { margin: 0; height: 100%; }
body {
  width: 2560px; height: 1440px; overflow: hidden;
  background: linear-gradient(90deg, #5c6779, #65708a 50%, #5c6a7b);
  font-family: "Liberation Sans", Arial, sans-serif;
  display: flex; flex-direction: column;
}
.defs { display: none; }

/* mac menu bar */
.menubar {
  height: 25px; flex: none; display: flex; align-items: center; gap: 20px;
  padding: 0 0 2px 19px; color: #fff; font: 13px Inter, sans-serif;
}
.apple { width: 14px; height: 16px; margin-top: -2px; margin-right: 1px; }
.menu-strong { font-weight: 700; }
.status { margin-left: auto; display: flex; align-items: center; padding-right: 19px; }
.si { width: 35.500px; height: 16px; }
.si.wide { height: 14px; }
.si.wifi { margin-left: 3px; margin-right: -3px; }
.clock { margin-left: 5px; width: 98px; white-space: nowrap; }

/* window */
.window { flex: 1; display: flex; flex-direction: column; border-radius: 10px 10px 0 10px; overflow: hidden; min-height: 0; background: #fff; }
.tabstrip { height: 40px; flex: none; background: #d3e3fd; display: flex; align-items: flex-start; padding-top: 6px; color: #1f1f1f; font: 12px Inter, sans-serif; }
.lights { display: flex; gap: 8px; padding: 8px 16px 0 21px; width: 89px; }
.light { width: 12px; height: 12px; border-radius: 50%; }
.red { background: #ff5f57; } .amber { background: #febc2e; } .green { background: #28c840; }
.pin { width: 44px; height: 28px; display: flex; align-items: center; justify-content: center; }
.fav { width: 16px; height: 16px; flex: none; }
.dark { color: #1a1a1a; }
.tsep { width: 2px; height: 16px; margin-top: 6px; background: #a8c7fa; flex: none; }
.tab-active { width: 40px; height: 34px; margin-left: 3px; margin-right: 3px; padding-bottom: 6px; background: #fff; border-radius: 10px 10px 0 0; display: flex; align-items: center; justify-content: center; }
.tab { width: 238.500px; height: 28px; display: flex; align-items: center; gap: 9px; padding: 0 10px; position: relative; }
.tab::after { content: ""; width: 2px; height: 16px; background: #a8c7fa; position: absolute; right: 0; top: 6px; }
.tab-title { flex: 1; min-width: 0; white-space: nowrap; color: #3a3a3a; }
.tab-title.fade { -webkit-mask-image: linear-gradient(90deg, #000 88%, transparent 100%); mask-image: linear-gradient(90deg, #000 88%, transparent 100%); }
.tab-x { width: 14px; font-size: 17px; line-height: 16px; text-align: center; color: #333; margin-right: 2px; }
.tab-plus { width: 28px; margin-left: 3px; text-align: center; font-size: 21px; line-height: 28px; color: #333; }
.tab-more { margin-left: auto; margin-right: 6px; width: 28px; height: 28px; border-radius: 8px; background: #e8f0fc; display: flex; align-items: center; justify-content: center; }

.toolbar { height: 40px; flex: none; padding-top: 6px; display: flex; align-items: center; background: #fff; padding-left: 15px; }
.nav { width: 16px; height: 16px; flex: none; margin-right: 20px; }
.omnibox { width: 1669px; height: 34px; margin-left: -3px; border-radius: 17px; background: #e9edf8; display: flex; align-items: center; padding: 0 16px 0 5px; font: 14px Inter, sans-serif; flex: none; }
.secure { height: 24px; width: 96px; background: #fff; border-radius: 12px; display: flex; align-items: center; justify-content: center; gap: 4px; font-size: 12px; color: #1f1f1f; }
.url { margin-left: 9px; color: #1f1f1f; font-size: 13.900px; }
.star { width: 16px; height: 16px; margin-left: auto; }
.exts { display: flex; padding-left: 8px; }
.ext { width: 36px; height: 20px; display: flex; align-items: center; justify-content: center; position: relative; }
.ext svg { width: 16px; height: 18px; }
.js { position: absolute; left: 18px; top: 7px; font-size: 10px; font-weight: 400; color: #333; }
.badge { position: absolute; left: 9px; top: 8px; height: 13px; width: 18px; border-radius: 3px; color: #fff; font-size: 10px; line-height: 13px; text-align: center; }
.orange { background: #f58220; color: #222; }
.brown { background: #7c5a35; }
.vsep { width: 2px; height: 20px; background: #d3e3fd; margin-left: 8px; }
.avatar { width: 18px; height: 18px; margin-left: 17px; }
.relaunch { width: 158px; height: 34px; margin-left: 13px; background: #d3e3fd; border-radius: 17px; display: flex; align-items: center; justify-content: space-between; padding: 0 14px 0 12px; color: #0b2e6b; font: 12.500px Inter, sans-serif; }

.bookmarks { height: 41px; flex: none; background: #fff; border-bottom: 1px solid #d0d2d6; display: flex; align-items: center; gap: 16px; padding: 0 15px 0 12px; font: 13px Roboto, sans-serif; color: #3c4043; }
.bm { display: flex; align-items: center; gap: 6px; white-space: nowrap; }
.bi { width: 16px; height: 16px; flex: none; }
.bm-more { margin-left: auto; font-size: 17px; line-height: 16px; }
.bsep { width: 2px; height: 20px; background: #d3e3fd; margin-left: 3px; }

/* page */
.page { flex: 1; display: flex; min-height: 0; }
.sidebar { width: 640px; flex: none; background: #34343e; position: relative; display: flex; flex-direction: column; }
.side-head { height: 106px; flex: none; padding-top: 10px; box-shadow: 0 4px 8px rgba(0,0,0,.2); position: relative; z-index: 1; background: #34343e; }
.side-tools { height: 18px; display: flex; align-items: center; padding-left: 204px; gap: 15.500px; }
.st { width: 16px; height: 16px; flex: none; color: #fff; }
.side-check { width: 18px; height: 18px; background: #fff; margin-left: -6px; display: flex; align-items: center; justify-content: center; border: 1px solid #666; }
.side-bar { height: 12px; width: 631px; background: #eee; margin-top: 17px; }
.filter { display: block; width: 610px; height: 23px; margin: 15px 0 0 13px; padding: 0 4px; border: 1px solid #777; font: 13.333px "Liberation Sans", "DejaVu Sans", sans-serif; background: #fff; }
.filter::placeholder { color: #757575; }
.pink-tag { position: absolute; left: -4px; top: 37px; width: 8px; height: 14px; border-radius: 4px; background: #ff4f7e; z-index: 2; }
.side-list { flex: 1; width: 637px; background: #f6f6f6; padding: 18.200px 11px 0; overflow: hidden; min-height: 0; border-bottom-left-radius: 10px; }
.row { height: 21.200px; margin-bottom: 2px; background: #fff; border-radius: 4px; display: flex; align-items: center; justify-content: space-between; padding: 0 6px 0 2.500px; font-size: 12px; color: #0000ee; white-space: nowrap; }
.row.v { color: #551a8b; }
.ri { width: 66px; height: 12px; flex: none; }
.group { margin: 0 0 0 -1px; height: 46px; line-height: 43px; font-size: 12px; font-weight: 700; color: #111; }
.section { margin: 0 0 1.500px -1px; width: 617px; height: 60px; padding-top: 39px; line-height: 20px; border-bottom: 1px solid #777; font-size: 18px; font-weight: 700; color: #000; }
.row.selected { height: 23.200px; margin: -1px -1px 1px; border: 1px solid #000; border-left: 12px solid #000; border-radius: 5px; }
.to-top { position: absolute; left: 255px; bottom: 12px; width: 40px; height: 26px; background: #34343e; border-radius: 3px; color: #fff; font-size: 12px; line-height: 26px; text-align: center; z-index: 3; }

/* main */
.main { flex: 1; display: flex; flex-direction: column; min-width: 0; background: #f5f5f5; }
.title-bar { height: 34px; flex: none; background: #4a475b; display: flex; align-items: center; justify-content: space-between; padding: 0 25px 0 5px; }
.title-bar h1 { margin: 0; font-size: 19.600px; font-weight: 700; color: #fff; }
.burger { width: 12px; height: 10px; margin-top: 4px; }
.actions { height: 50px; flex: none; background: #393543; display: flex; align-items: center; padding-left: 19px; gap: 31px; color: #fff; font-size: 14px; box-shadow: 0 4px 10px rgba(0,0,0,.12); position: relative; }
.act { display: flex; align-items: center; gap: 4px; white-space: nowrap; }
.act svg { width: 13px; height: 13px; color: #fff; flex: none; }
.act svg.thin { width: 9px; }
.act svg.slim { width: 6px; margin-right: 1px; }
.act svg.broad { width: 15px; height: 15px; }
.act.wide { margin-left: 15px; }
.act.tight { margin-left: -3px; }
.act.nudge { margin-left: 3px; }
.content { flex: 1; min-height: 0; padding: 16px 19px 0 16px; }
.card { height: 100%; background: #fff; border-radius: 4px 4px 0 0; position: relative; box-shadow: 0 0 10px rgba(0,0,0,.05); padding: 505px 0 0 500.500px; }
.grid-wrap { width: 799px; border-bottom: 1px solid #ccc; padding-bottom: 2px; color: #000; font-size: 16px; }
.grid-title { height: 29px; font-size: 20px; line-height: 24px; text-align: center; }
.grid { border-collapse: collapse; table-layout: fixed; width: 799px; }
.grid th, .grid td { border: 1px solid #ccc; padding: 0 4px; text-align: left; height: 36px; }
.grid th { background: #f2f2f2; text-align: center; font-weight: 700; height: 34px; padding: 3px 12px 0 4px; position: relative; }
.c1, .c2 { width: 160px; }
.c3 { width: 218px; }
.grid tbody tr:nth-child(even) td { background: #f7f7f7; }
.grid a { color: #0000ee; }
.resizer { position: absolute; right: -5px; top: 7px; width: 11px; height: 20px; border-left: 1px solid #bbb; border-right: 1px solid #bbb; }
.grid td.editing { padding: 0; }
.editor { display: block; width: 100%; height: 34px; border: 1px solid #0000ee; background: #b3d1fb; padding: 0 2px; font: 13.333px "Liberation Sans", sans-serif; color: #222; outline: none; }
.grid td.marked { outline: 2px solid #ff8a80; outline-offset: -1px; }
.notes { position: absolute; left: 0; top: 0; width: 1885px; height: 1194px; pointer-events: none; }
.notes text { font-size: 20px; fill: #ff5a5f; font-family: "Liberation Sans", Arial, sans-serif; }
.notes path { fill: none; stroke: #ff6a6a; stroke-width: 1; }
.notes marker path { fill: #ff5a5a; stroke: none; }
```
